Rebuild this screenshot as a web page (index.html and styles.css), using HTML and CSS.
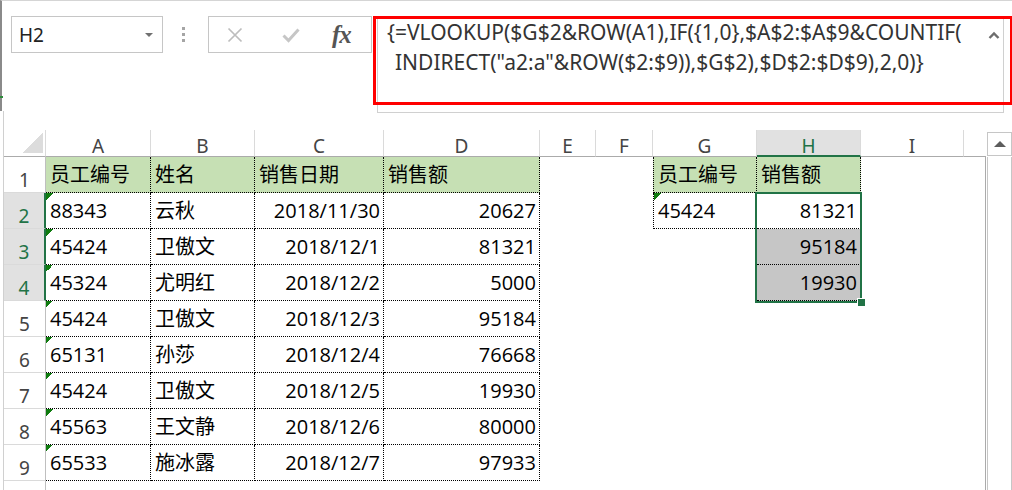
FILE: index.html
```html
<!DOCTYPE html>
<html lang="zh-CN">
<head>
    <meta charset="UTF-8">
    <title>销售数据 - VLOOKUP</title>
    <link rel="stylesheet" href="styles.css">
</head>
<body>
    <div class="toolbar">
        <div class="namebox">
            <span>H2</span>
            <span class="drop"></span>
        </div>
        <div class="dots"><span></span><span></span><span></span></div>
        <div class="fxbox">
            <svg class="ico-x" width="16" height="16" viewBox="0 0 16 16"><path d="M1.5 1.5L14.5 14.5M14.5 1.5L1.5 14.5" stroke="#bdbdbd" stroke-width="1.7" fill="none"/></svg>
            <svg class="ico-ok" width="18" height="16" viewBox="0 0 18 16"><path d="M1.5 8.5L6.5 13.5L16.5 2.5" stroke="#c6c6c6" stroke-width="3" fill="none"/></svg>
            <span class="fx">fx</span>
        </div>
        <div class="formula">
            <div class="ftext">
                <div>{=VLOOKUP($G$2&amp;ROW(A1),IF({1,0},$A$2:$A$9&amp;COUNTIF(</div>
                <div class="wrap">INDIRECT("a2:a"&amp;ROW($2:$9)),$G$2),$D$2:$D$9),2,0)}</div>
            </div>
            <svg class="caret" width="12" height="8" viewBox="0 0 12 8"><path d="M1.5 7L6 2.5L10.5 7" stroke="#6d6d6d" stroke-width="2.4" fill="none"/></svg>
        </div>
        <div class="mark"></div>
    </div>

    <div class="sheet">
        <div class="grid">
            <!-- column headers -->
            <div class="corner"></div>
            <div class="ch">A</div>
            <div class="ch">B</div>
            <div class="ch">C</div>
            <div class="ch">D</div>
            <div class="ch">E</div>
            <div class="ch">F</div>
            <div class="ch">G</div>
            <div class="ch on">H</div>
            <div class="ch">I</div>
            <div class="ch end"></div>

            <!-- row 1 -->
            <div class="rh">1</div>
            <div class="c g b">员工编号</div>
            <div class="c g b">姓名</div>
            <div class="c g b">销售日期</div>
            <div class="c g b">销售额</div>
            <div class="c"></div>
            <div class="c"></div>
            <div class="c g b gl">员工编号</div>
            <div class="c g b">销售额</div>
            <div class="c"></div>
            <div class="c f"></div>

            <!-- row 2 -->
            <div class="rh on">2</div>
            <div class="c b t">88343</div>
            <div class="c b">云秋</div>
            <div class="c b r">2018/11/30</div>
            <div class="c b r">20627</div>
            <div class="c"></div>
            <div class="c"></div>
            <div class="c b gl t">45424</div>
            <div class="c b r">81321</div>
            <div class="c"></div>
            <div class="c f"></div>

            <!-- row 3 -->
            <div class="rh on">3</div>
            <div class="c b t">45424</div>
            <div class="c b">卫傲文</div>
            <div class="c b r">2018/12/1</div>
            <div class="c b r">81321</div>
            <div class="c"></div>
            <div class="c"></div>
            <div class="c"></div>
            <div class="c b r s">95184</div>
            <div class="c"></div>
            <div class="c f"></div>

            <!-- row 4 -->
            <div class="rh on">4</div>
            <div class="c b t">45324</div>
            <div class="c b">尤明红</div>
            <div class="c b r">2018/12/2</div>
            <div class="c b r">5000</div>
            <div class="c"></div>
            <div class="c"></div>
            <div class="c"></div>
            <div class="c b r s">19930</div>
            <div class="c"></div>
            <div class="c f"></div>

            <!-- row 5 -->
            <div class="rh">5</div>
            <div class="c b t">45424</div>
            <div class="c b">卫傲文</div>
            <div class="c b r">2018/12/3</div>
            <div class="c b r">95184</div>
            <div class="c"></div><div class="c"></div><div class="c"></div><div class="c"></div><div class="c"></div>
            <div class="c f"></div>

            <!-- row 6 -->
            <div class="rh">6</div>
            <div class="c b t">65131</div>
            <div class="c b">孙莎</div>
            <div class="c b r">2018/12/4</div>
            <div class="c b r">76668</div>
            <div class="c"></div><div class="c"></div><div class="c"></div><div class="c"></div><div class="c"></div>
            <div class="c f"></div>

            <!-- row 7 -->
            <div class="rh">7</div>
            <div class="c b t">45424</div>
            <div class="c b">卫傲文</div>
            <div class="c b r">2018/12/5</div>
            <div class="c b r">19930</div>
            <div class="c"></div><div class="c"></div><div class="c"></div><div class="c"></div><div class="c"></div>
            <div class="c f"></div>

            <!-- row 8 -->
            <div class="rh">8</div>
            <div class="c b t">45563</div>
            <div class="c b">王文静</div>
            <div class="c b r">2018/12/6</div>
            <div class="c b r">80000</div>
            <div class="c"></div><div class="c"></div><div class="c"></div><div class="c"></div><div class="c"></div>
            <div class="c f"></div>

            <!-- row 9 -->
            <div class="rh">9</div>
            <div class="c b t">65533</div>
            <div class="c b">施冰露</div>
            <div class="c b r">2018/12/7</div>
            <div class="c b r">97933</div>
            <div class="c"></div><div class="c"></div><div class="c"></div><div class="c"></div><div class="c"></div>
            <div class="c f"></div>

            <!-- row 10, only its top edge shows -->
            <div class="rh"></div>
            <div class="c"></div><div class="c"></div><div class="c"></div><div class="c"></div><div class="c"></div>
            <div class="c"></div><div class="c"></div><div class="c"></div><div class="c"></div>
            <div class="c f"></div>

            <div class="selection"><span class="handle"></span></div>
        </div>

        <div class="vscroll">
            <div class="up"><span></span></div>
            <div class="track"></div>
        </div>
    </div>
</body>
</html>
```

FILE: styles.css
```css
* {
    box-sizing: border-box;
}

body {
    margin: 0;
    width: 1012px;
    height: 490px;
    overflow: hidden;
    background-color: #fff;
    font-family: "Noto Sans", "Noto Sans CJK SC", sans-serif;
}

/* formula bar */

.toolbar {
    position: relative;
    height: 111px;
    border-top: 1px solid #d5d5d5;
    border-left: 2px solid #8a8a8a;
    display: flex;
    align-items: flex-start;
    padding: 15px 0 0 9px;
}

.mark {
    position: absolute;
    left: -2px;
    top: 95px;
    width: 3px;
    height: 2px;
    background-color: #2e8b3a;
}

.namebox {
    width: 152px;
    height: 37px;
    border: 1px solid #c6c6c6;
    display: flex;
    align-items: center;
    padding: 0 9px 0 7px;
    font-size: 19px;
    color: #222;
}

.namebox .drop {
    margin-left: auto;
    width: 0;
    height: 0;
    border-left: 4px solid transparent;
    border-right: 4px solid transparent;
    border-top: 4px solid #707070;
}

.dots {
    display: flex;
    flex-direction: column;
    gap: 3px;
    margin: 11px 23px 0 19px;
}

.dots span {
    width: 3px;
    height: 3px;
    background-color: #a5a5a5;
}

.fxbox {
    width: 164px;
    height: 37px;
    border: 1px solid #c6c6c6;
    display: flex;
    align-items: center;
    padding-left: 18px;
}

.ico-ok {
    margin-left: 39px;
}

.fx {
    margin-left: 32px;
    font-family: "Liberation Serif", serif;
    font-style: italic;
    font-weight: bold;
    font-size: 25px;
    color: #555;
    letter-spacing: -1px;
}

.formula {
    margin-left: 5px;
    width: 627px;
    height: 97px;
    border: 1px solid #d0d0d0;
    display: flex;
    padding-left: 9px;
    font-size: 21px;
    line-height: 30px;
    color: #333;
    white-space: nowrap;
}

.ftext {
    flex: 1;
}

.ftext .wrap {
    padding-left: 8px;
}

.caret {
    margin: 14px 3px 0 0;
}

.toolbar::after {
    content: "";
    position: absolute;
    left: 371px;
    top: 15px;
    width: 634px;
    height: 83px;
    border: 3px solid #f00;
}

/* sheet */

.sheet {
    display: flex;
    gap: 1px;
    height: 379px;
    margin-left: 3px;
    border-left: 1px solid #d0d0d0;
    padding-top: 19px;
}

.grid {
    position: relative;
    display: grid;
    grid-template-columns: 42px 105px 104px 129px 156px 56px 57px 104px 104px 103px 22px;
    grid-template-rows: 27px;
    grid-auto-rows: 36px;
    width: 982px;
    height: 360px;
    overflow: hidden;
    align-self: flex-start;
}

.corner {
    border-right: 1px solid #dadada;
    border-bottom: 1px solid #ababab;
    background: linear-gradient(to bottom right, transparent 50%, #dcdcdc 50%) no-repeat right 2px bottom 3px / 20px 20px;
}

.ch {
    border-right: 1px solid #dadada;
    border-bottom: 1px solid #ababab;
    text-align: center;
    font-size: 19px;
    line-height: 32px;
    color: #444;
}

.ch.end {
    border-right: none;
}

.ch.on {
    background-color: #e1e1e1;
    color: #217346;
    border-bottom: 2px solid #217346;
}

.rh {
    border-right: 1px solid #bfbfbf;
    border-bottom: 1px solid #dadada;
    display: flex;
    align-items: flex-end;
    justify-content: center;
    padding-bottom: 2px;
    font-size: 19px;
    line-height: 1;
    color: #444;
}

.rh.on {
    background-color: #e1e1e1;
    color: #217346;
    border-right: 2px solid #217346;
}

.c {
    padding: 0 3px 0 4px;
    font-family: "Open Sans", "Noto Sans CJK SC", sans-serif;
    font-size: 20px;
    line-height: 35px;
    color: #000;
    white-space: nowrap;
}

.c.g {
    background-color: #c6e0b4;
}

.c.b {
    border-right: 1px dotted #000;
    border-bottom: 1px dotted #000;
}

.c.gl {
    border-left: 1px dotted #000;
}

.c.r {
    text-align: right;
}

.c.s {
    background-color: #c6c6c6;
}

.c.t {
    background: linear-gradient(135deg, #0f7b0f 50%, transparent 50%) no-repeat 0 0 / 7px 7px;
}

.c.f {
    border-right: 1px solid #ababab;
}

.selection {
    position: absolute;
    left: 751px;
    top: 62px;
    width: 107px;
    height: 111px;
    border: 2px solid #217346;
}

.handle {
    position: absolute;
    right: -5px;
    bottom: -5px;
    width: 8px;
    height: 8px;
    background-color: #217346;
    border-left: 1px solid #fff;
    border-top: 1px solid #fff;
}

/* scroll bar */

.vscroll {
    width: 25px;
    display: flex;
    flex-direction: column;
    gap: 1px;
    padding-top: 2px;
}

.vscroll .up {
    height: 24px;
    border: 1px solid #c6c6c6;
    display: flex;
    align-items: center;
    justify-content: center;
}

.vscroll .up span {
    width: 0;
    height: 0;
    border-left: 6px solid transparent;
    border-right: 6px solid transparent;
    border-bottom: 6px solid #5d5d5d;
}

.vscroll .track {
    flex: 1;
    border-left: 1px solid #c6c6c6;
    border-right: 1px solid #c6c6c6;
}
```
